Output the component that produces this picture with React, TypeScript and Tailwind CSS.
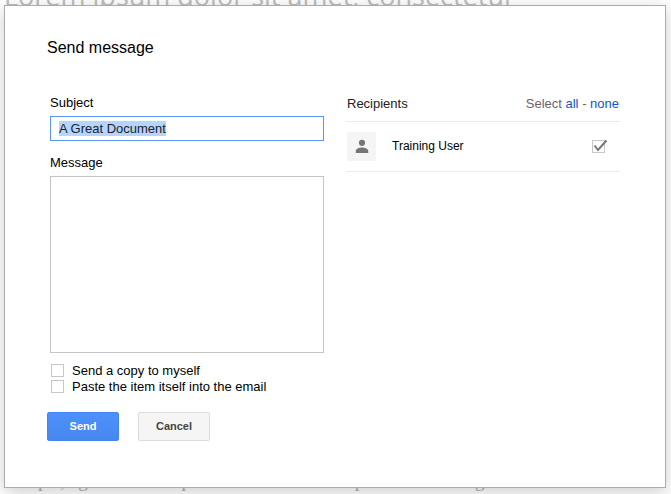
export default function App() {
  return (
    <div className="relative w-[671px] h-[494px] overflow-hidden bg-white font-['Liberation_Sans',Arial,sans-serif]">
      <p className="mt-[-20px] ml-[4px] whitespace-nowrap text-[27px] leading-[32px] font-medium text-[#bdbdbd] font-['Open_Sans',sans-serif]">Lorem ipsum dolor sit amet, consectetur</p>
      <p className="mt-[457px] ml-[17px] whitespace-nowrap text-[19px] leading-[24px] text-[#b0b0b0] font-['Liberation_Serif',serif]">turpis, eget mollis neque dictum vivamus in purus dolor integer accumsan</p>
      <div className="absolute left-[4px] top-[5px] w-[662px] h-[483px] bg-white border border-[#acacac] shadow-[0_4px_16px_rgba(0,0,0,0.2)]">
        <div className="pl-[42px] pt-[32px] text-[16px] leading-[20px] text-black">Send message</div>
        <div className="flex items-start pl-[45px] pt-[34px]">
          <div className="mt-[3px] w-[274px] flex flex-col">
            <label className="text-[13px] leading-[15px] text-black">Subject</label>
            <div className="mt-[6px] h-[25px] border border-[#5b96f7] flex items-center pl-[8px] text-[13px] text-[#222]">
              <span className="bg-[#b4d5fe] leading-[15px]">A Great Document</span>
            </div>
            <label className="mt-[14px] text-[13px] leading-[15px] text-black">Message</label>
            <div className="mt-[6px] h-[177px] border border-[#c4c4c4]" />
            <div className="mt-[9px] flex items-center h-[16px]">
              <span className="ml-[1px] w-[13px] h-[13px] border border-[#c6c6c6]" />
              <span className="ml-[8px] text-[13px] leading-[15px] text-black">Send a copy to myself</span>
            </div>
            <div className="flex items-center h-[16px]">
              <span className="ml-[1px] w-[13px] h-[13px] border border-[#c6c6c6]" />
              <span className="ml-[8px] text-[13px] leading-[15px] text-black">Paste the item itself into the email</span>
            </div>
            <div className="mt-[18px] -ml-[3px] flex gap-[19px]">
              <button className="w-[72px] h-[29px] rounded-[2px] border border-[#4285f4] bg-gradient-to-b from-[#4d90fe] to-[#4787ed] text-white text-[11px] font-bold">Send</button>
              <button className="w-[72px] h-[29px] rounded-[2px] border border-[#dcdcdc] bg-[#f5f5f5] text-[#444] text-[11px] font-bold">Cancel</button>
            </div>
          </div>
          <div className="ml-[22px] w-[274px]">
            <div className="flex justify-between items-center h-[22px] pl-[1px] pr-[1px] text-[13px] leading-[15px] pb-[7px] box-content border-b border-[#ebebeb]">
              <span className="text-[#222]">Recipients</span>
              <span className="text-[#666]">Select <span className="text-[#15c]">all</span> - <span className="text-[#15c]">none</span></span>
            </div>
            <div className="flex items-center h-[50px] border-b border-[#ebebeb] pl-[1px] pr-[15px]">
              <div className="-mt-[1px] w-[29px] h-[29px] bg-[#f5f5f5] flex items-center justify-center">
                <svg width="14" height="14" viewBox="0 0 14 14" fill="#757575"><circle cx="7" cy="3.8" r="3.1" /><path d="M0.8 14v-2.2C0.8 9.6 4.5 8.4 7 8.4s6.2 1.2 6.2 3.4V14z" /></svg>
              </div>
              <span className="ml-[16px] -mt-[2px] text-[12px] text-black flex-1">Training User</span>
              <div className="relative w-[13px] h-[13px] border border-[#c6c6c6]">
                <svg className="absolute left-[-1px] top-[-4px]" width="17" height="16" viewBox="0 0 17 16" fill="none" stroke="#777" strokeWidth="2"><path d="M2.5 8.5L6 13l8.5-9.5" /></svg>
              </div>
            </div>
          </div>
        </div>
      </div>
    </div>
  );
}
